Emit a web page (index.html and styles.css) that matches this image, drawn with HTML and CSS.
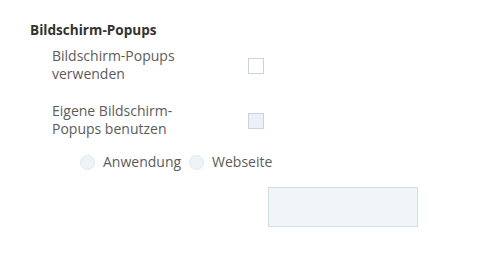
FILE: index.html
```html
<!DOCTYPE html>
<html lang="de">
<head>
    <meta charset="UTF-8">
    <meta name="viewport" content="width=device-width, initial-scale=1.0">
    <title>Bildschirm-Popups</title>
    <link rel="stylesheet" href="styles.css">
</head>
<body>
    <!-- Einstellungen für Popups -->
    <div class="panel">
        <h3 class="title">Bildschirm-Popups</h3>

        <div class="row">
            <label class="label" for="use-popups">Bildschirm-Popups verwenden</label>
            <input type="checkbox" id="use-popups" class="check">
        </div>

        <div class="row row-second">
            <label class="label" for="own-popups">Eigene Bildschirm-Popups benutzen</label>
            <input type="checkbox" id="own-popups" class="check check-disabled">
        </div>

        <div class="radios">
            <label class="radio"><span class="dot"></span>Anwendung</label>
            <label class="radio"><span class="dot"></span>Webseite</label>
        </div>

        <div class="field-wrap">
            <div class="field"></div>
        </div>
    </div>
</body>
</html>
```

FILE: styles.css
```css
/* Grundstil der Seite */
body {
    margin: 0;
    background: #fff;
    font-family: 'Open Sans', 'Liberation Sans', sans-serif;
    font-size: 14px;
    line-height: 18px;
    color: #5c5c5c;
}

.panel {
    padding: 21px 0 0 30px;
}

/* Überschrift */
.title {
    margin: 0 0 8px;
    font-size: 13.6px;
    line-height: 18px;
    font-weight: bold;
    color: #333;
}

/* Zeile mit Text und Checkbox */
.row {
    display: grid;
    grid-template-columns: 196px 16px;
    align-items: center;
    padding-left: 22px;
}

.row-second {
    margin-top: 19px;
}

.label {
    max-width: 140px;
}

.check {
    appearance: none;
    margin: 2px 0 0;
    width: 16px;
    height: 16px;
    box-sizing: border-box;
    border: 1px solid #c9d4dc;
    background: #fff;
}

.check-disabled {
    background: #e9f0f7;
}

/* Auswahl Anwendung / Webseite */
.radios {
    display: flex;
    gap: 8px;
    margin-top: 15px;
    padding-left: 50px;
}

.radio {
    display: flex;
    align-items: center;
}

.dot {
    width: 15px;
    height: 15px;
    box-sizing: border-box;
    border: 1px solid #e1e8ee;
    border-radius: 50%;
    background: #eef3f8;
    margin-right: 8px;
}

/* leeres Feld unten */
.field-wrap {
    padding: 16px 0 0 238px;
}

.field {
    width: 150px;
    height: 40px;
    box-sizing: border-box;
    border: 1px solid #d3dee3;
    background: #f0f5f8;
}
```
